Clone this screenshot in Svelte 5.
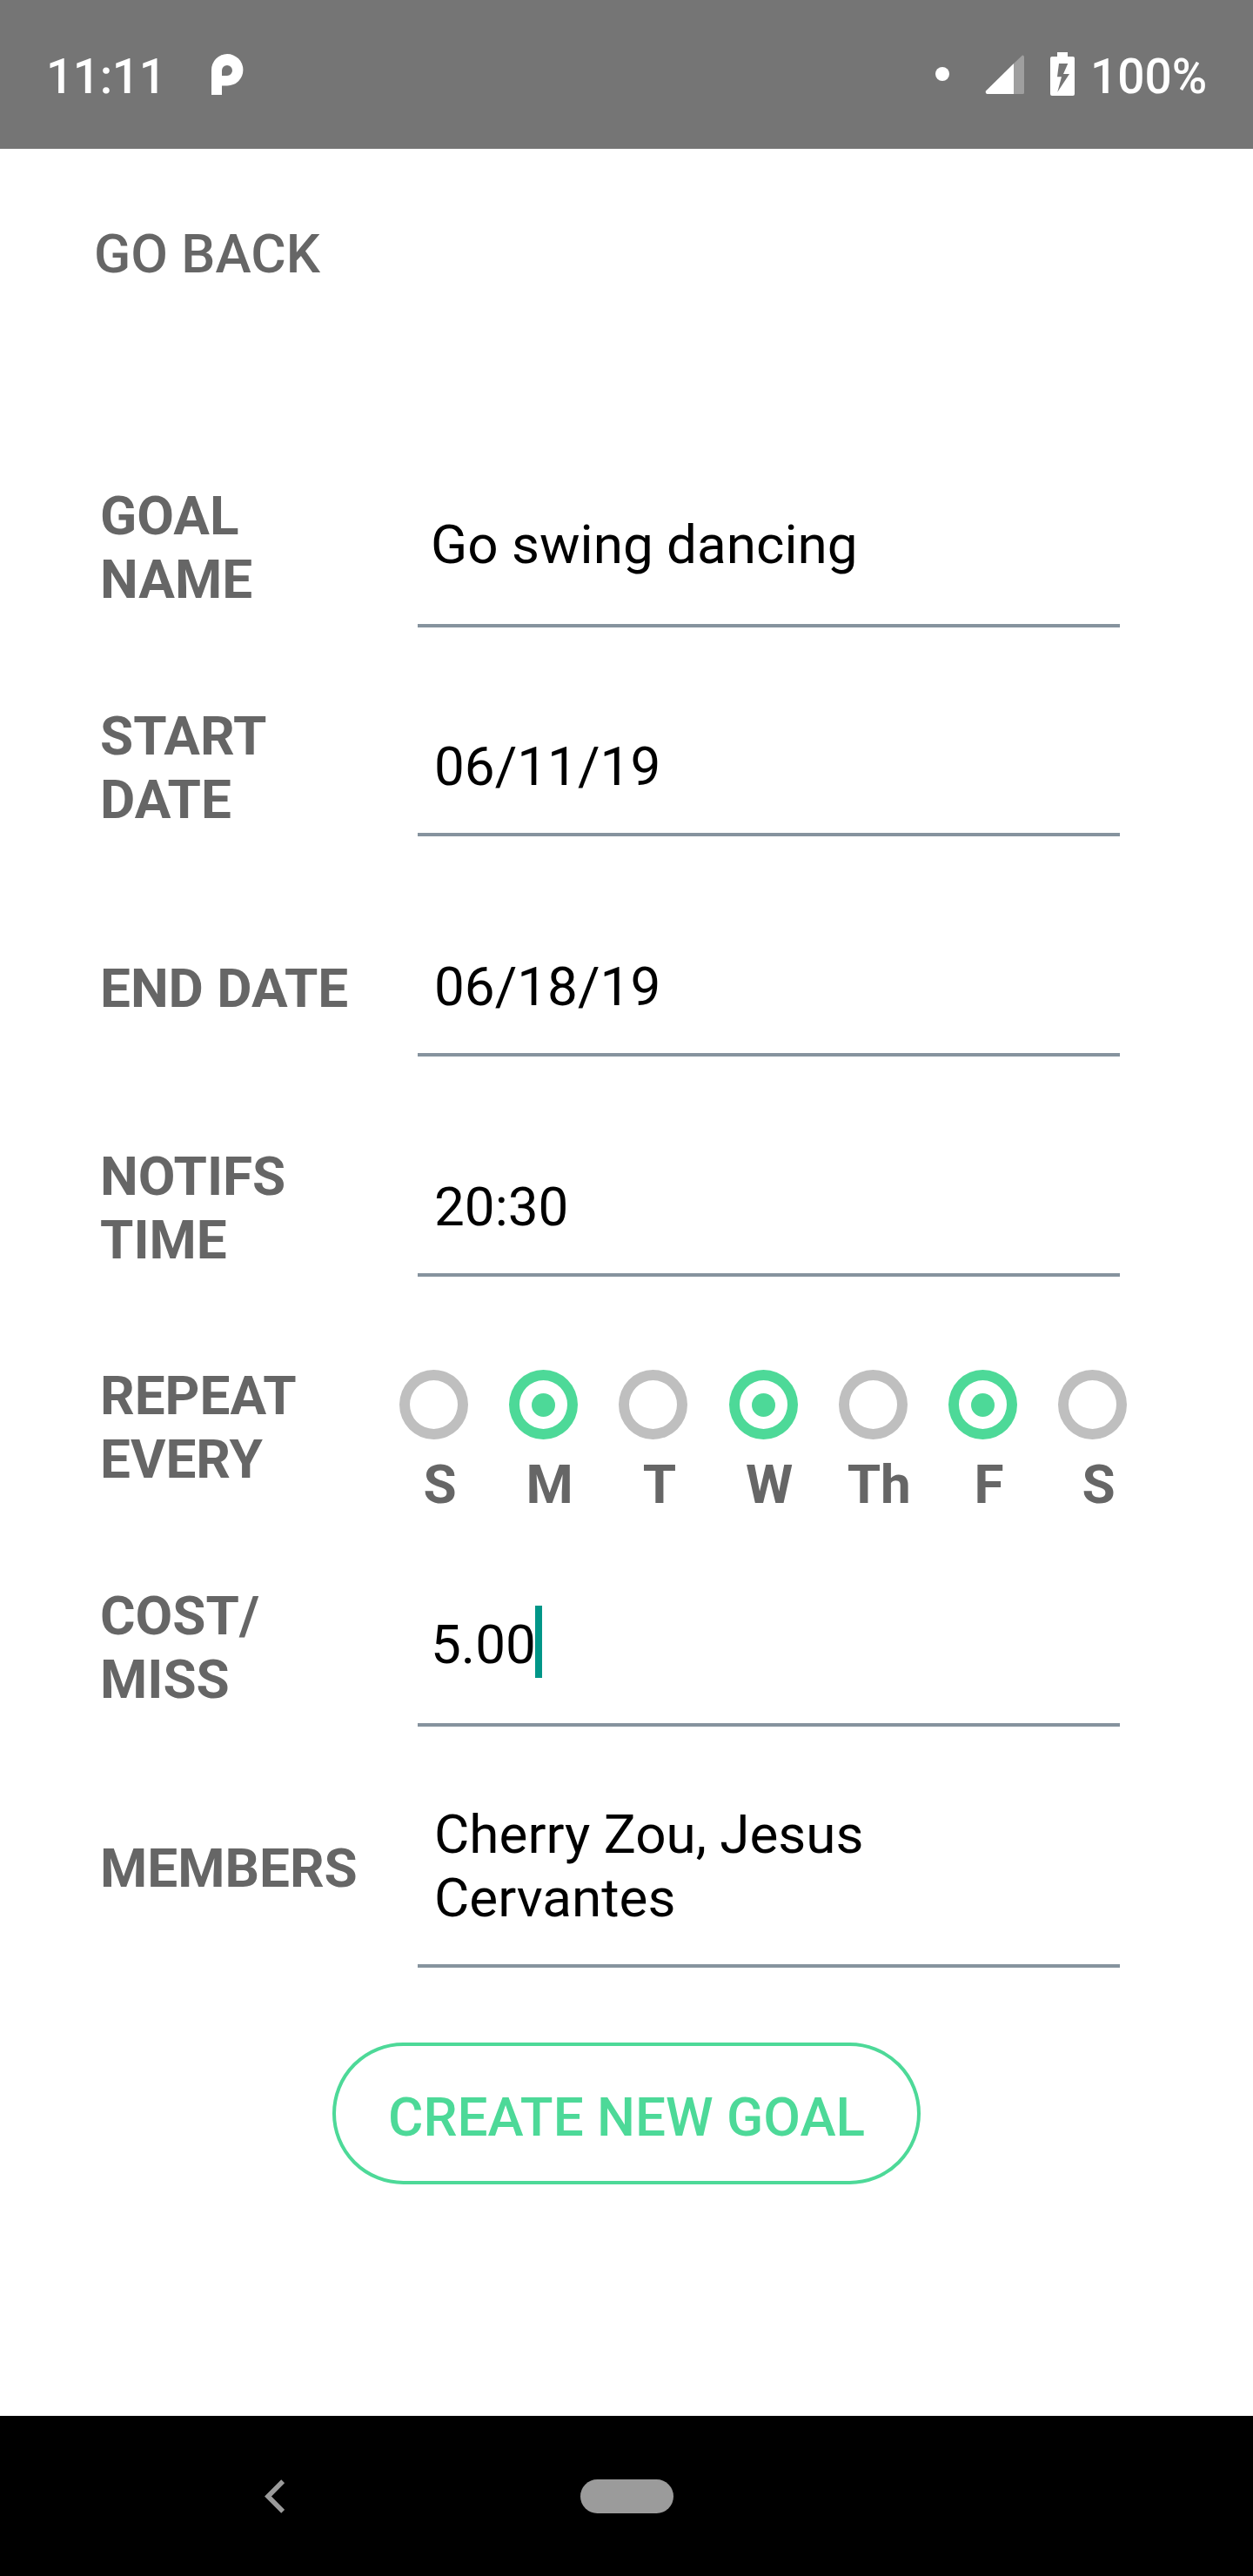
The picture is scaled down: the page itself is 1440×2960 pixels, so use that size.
<script>
  const days = [
    { label: 'S', on: false },
    { label: 'M', on: true },
    { label: 'T', on: false },
    { label: 'W', on: true },
    { label: 'Th', on: false },
    { label: 'F', on: true },
    { label: 'S', on: false },
  ];
</script>

<div class="screen">
  <header class="status">
    <span class="clock">11:11</span>
    <svg class="app-mark" width="38" height="48" viewBox="0 0 38 48">
      <path d="M1 47V18.500A18.200 18.200 0 1 1 19.200 36.500H13V47Z M13 25H19A6 6 0 1 0 13 19Z" fill="#fff" fill-rule="evenodd" />
    </svg>
    <svg class="indicators" width="164" height="52" viewBox="0 0 164 52">
      <circle cx="9" cy="26" r="8" fill="#fff" />
      <path d="M91 14L101 4.600Q103 4 103 7V47.500Q103 49 101.500 49H91Z" fill="#9f9f9f" />
      <path d="M91 14V49H60.500Q58 48 59 45.500Z" fill="#fff" />
      <path d="M141 1H153V6H159Q161 6 161 8V49Q161 51 159 51H135Q133 51 133 49V8Q133 6 135 6H141ZM143 14L141 29.300H146L141.300 46.700L155 26H148L153.300 14Z" fill="#fff" fill-rule="evenodd" />
    </svg>
    <span class="level">100%</span>
  </header>

  <main>
    <div class="back">GO BACK</div>

    <section class="row name">
      <div class="label">GOAL<br />NAME</div>
      <div class="field input">Go swing dancing</div>
    </section>
    <section class="row start">
      <div class="label">START<br />DATE</div>
      <div class="field">06/11/19</div>
    </section>
    <section class="row end">
      <div class="label">END DATE</div>
      <div class="field">06/18/19</div>
    </section>
    <section class="row time">
      <div class="label">NOTIFS<br />TIME</div>
      <div class="field">20:30</div>
    </section>
    <section class="row repeat">
      <div class="label">REPEAT<br />EVERY</div>
      <div class="days">
        {#each days as day}
          <div class="day">
            <span class="radio" class:on={day.on}></span>
            <span class="day-label">{day.label}</span>
          </div>
        {/each}
      </div>
    </section>
    <section class="row cost">
      <div class="label">COST/<br />MISS</div>
      <div class="field input"><span class="amount">5.00</span><span class="caret"></span></div>
    </section>
    <section class="row members">
      <div class="label">MEMBERS</div>
      <div class="field">Cherry Zou, Jesus<br />Cervantes</div>
    </section>

    <button class="create">CREATE NEW GOAL</button>
  </main>

  <nav>
    <svg class="nav-back" width="24" height="42" viewBox="0 0 24 42">
      <path d="M22.200 3.200L5 20.500L22.200 37.800" fill="none" stroke="#9b9b9b" stroke-width="5.600" />
    </svg>
    <span class="home"></span>
  </nav>
</div>

<style>
  :global(body) {
    margin: 0;
    background: #fff;
  }
  .screen {
    width: 1440px;
    height: 2960px;
    display: flex;
    flex-direction: column;
    background: #fff;
    font-family: Roboto, sans-serif;
    font-size: 62px;
    line-height: 73px;
    color: #000;
    white-space: nowrap;
  }
  .status {
    box-sizing: border-box;
    height: 171px;
    padding: 0 54px 0 53px;
    display: flex;
    align-items: flex-start;
    background: #757575;
    color: #fff;
    font-size: 55px;
    font-weight: 500;
    line-height: 64px;
  }
  .clock,
  .level {
    padding-top: 56px;
  }
  .clock {
    width: 189px;
    letter-spacing: -0.400px;
  }
  .app-mark {
    margin-top: 62px;
  }
  .indicators {
    margin: 59px 0 0 auto;
  }
  .level {
    width: 133px;
    margin-left: 15px;
  }
  main {
    height: 2605px;
    display: flex;
    flex-direction: column;
  }
  .back {
    box-sizing: border-box;
    height: 275px;
    padding: 84px 0 0 108px;
    font-weight: 500;
    color: #666;
  }
  .row {
    box-sizing: border-box;
    height: 253px;
    padding-left: 115px;
    display: flex;
    align-items: flex-end;
  }
  .label {
    width: 365px;
    font-weight: 700;
    color: #666;
  }
  .field {
    box-sizing: border-box;
    width: 807px;
    padding: 0 0 40px 19px;
    border-bottom: 4px solid #86939e;
  }
  .input {
    padding-left: 15px;
  }
  .name {
    height: 275px;
  }
  .name .label {
    padding-bottom: 19px;
  }
  .name .field {
    padding-bottom: 55px;
  }
  .start {
    height: 240px;
  }
  .start .label,
  .time .label {
    padding-bottom: 6px;
  }
  .end .label {
    padding-bottom: 42px;
  }
  .repeat {
    height: 264px;
    align-items: flex-start;
    padding-top: 100px;
  }
  .repeat .label {
    width: 320px;
  }
  .days {
    display: flex;
  }
  .day {
    width: 126.200px;
    display: flex;
    flex-direction: column;
    align-items: flex-start;
  }
  .radio {
    box-sizing: border-box;
    width: 79px;
    height: 80px;
    margin: 7px 0 0 24px;
    border: 12px solid #bfbfbf;
    border-radius: 50%;
    display: grid;
    place-items: center;
  }
  .radio.on {
    border-color: #4dd998;
  }
  .radio.on::after {
    content: '';
    width: 27px;
    height: 27px;
    border-radius: 50%;
    background: #4dd998;
  }
  .day-label {
    width: 79px;
    margin: 15px 0 0 31px;
    display: flex;
    justify-content: center;
    font-weight: 700;
    color: #666;
  }
  .cost .label {
    padding-bottom: 18px;
  }
  .cost .field {
    display: flex;
    align-items: flex-start;
    height: 139px;
  }
  .amount {
    padding-top: 8px;
  }
  .caret {
    width: 8px;
    height: 83px;
    margin-left: -1px;
    background: #009688;
  }
  .members {
    height: 277px;
  }
  .members .label {
    padding-bottom: 78px;
  }
  .create {
    box-sizing: border-box;
    width: 676px;
    height: 163px;
    margin: 86px 0 0 382px;
    padding: 8px 0 0;
    border: 4px solid #4dd998;
    border-radius: 82px;
    background: #fff;
    color: #4dd998;
    font: 500 62px/73px Roboto, sans-serif;
  }
  nav {
    flex: 1;
    display: flex;
    align-items: flex-start;
    padding: 0 0 0 303px;
    background: #000;
  }
  .nav-back {
    margin-top: 72px;
  }
  .home {
    width: 107px;
    height: 39px;
    margin: 73px 0 0 340px;
    border-radius: 20px;
    background: #9b9b9b;
  }
</style>
